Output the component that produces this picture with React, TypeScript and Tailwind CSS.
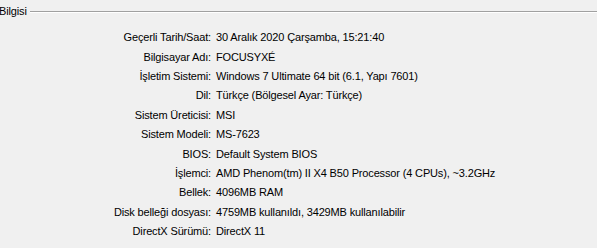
const rows: [string, string][] = [
  ['Geçerli Tarih/Saat:', '30 Aralık 2020 Çarşamba, 15:21:40'],
  ['Bilgisayar Adı:', 'FOCUSYXÉ'],
  ['İşletim Sistemi:', 'Windows 7 Ultimate 64 bit (6.1, Yapı 7601)'],
  ['Dil:', 'Türkçe (Bölgesel Ayar: Türkçe)'],
  ['Sistem Üreticisi:', 'MSI'],
  ['Sistem Modeli:', 'MS-7623'],
  ['BIOS:', 'Default System BIOS'],
  ['İşlemci:', 'AMD Phenom(tm) II X4 B50 Processor (4 CPUs), ~3.2GHz'],
  ['Bellek:', '4096MB RAM'],
  ['Disk belleği dosyası:', '4759MB kullanıldı, 3429MB kullanılabilir'],
  ['DirectX Sürümü:', 'DirectX 11'],
]

export default function App() {
  return (
    <div className="w-[597px] h-[248px] bg-[#f0f0f0] text-black text-[11px] leading-none tracking-[-0.15px] overflow-hidden font-['Liberation_Sans',sans-serif]">
      {/* group box header */}
      <div className="flex items-start h-[28px] pt-[6px]">
        <span className="pr-[3px] -ml-[1px]">Bilgisi</span>
        <div className="flex-1 mt-[5px] border-t border-t-[#a0a0a0] border-b border-b-white" />
      </div>

      <div className="flex flex-col">
        {rows.map(function (r) {
          return (
            <div key={r[0]} className="flex items-center h-[19.4px]">
              <div className="w-[211px] text-right shrink-0">{r[0]}</div>
              <div className="pl-[5px] whitespace-nowrap">{r[1]}</div>
            </div>
          )
        })}
      </div>
    </div>
  )
}
